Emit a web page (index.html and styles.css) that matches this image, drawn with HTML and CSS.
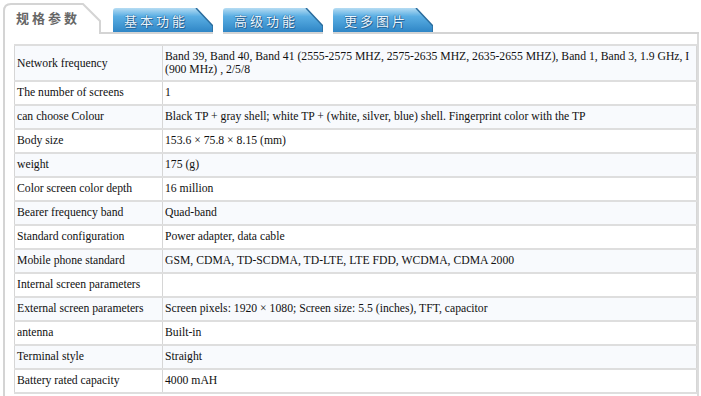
FILE: index.html
```html
<!DOCTYPE html>
<html>
<head>
<meta charset="utf-8">
<link rel="stylesheet" href="styles.css">
</head>
<body>
<div class="wrap">
  <div class="tabs">
    <div class="tab active">
      <svg class="tab-bg" width="98" height="31" viewBox="0 0 98 31"><path d="M1,31 L1,8 Q1,1 8,1 L80,1 L97,18 L97,31" fill="#fff" stroke="#d4d4d4" stroke-width="2"/></svg>
      <span class="tab-label">规格参数</span>
    </div>
    <div class="tab blue">
      <svg class="tab-bg" width="100" height="24" viewBox="0 0 100 24"><defs><linearGradient id="g1" x1="0" y1="0" x2="0" y2="1"><stop offset="0" stop-color="#b6dcf3"/><stop offset="0.35" stop-color="#5aaee3"/><stop offset="1" stop-color="#2f86c6"/></linearGradient></defs><path d="M0,24 L0,3 Q0,0 3,0 L83,0 L100,18 L100,24 Z" fill="url(#g1)"/><path d="M83,0 L100,18 L100,24" fill="none" stroke="#2a6c9c" stroke-width="1.5"/></svg>
      <span class="tab-label">基本功能</span>
    </div>
    <div class="tab blue">
      <svg class="tab-bg" width="100" height="24" viewBox="0 0 100 24"><path d="M0,24 L0,3 Q0,0 3,0 L83,0 L100,18 L100,24 Z" fill="url(#g1)"/><path d="M83,0 L100,18 L100,24" fill="none" stroke="#2a6c9c" stroke-width="1.5"/></svg>
      <span class="tab-label">高级功能</span>
    </div>
    <div class="tab blue">
      <svg class="tab-bg" width="100" height="24" viewBox="0 0 100 24"><path d="M0,24 L0,3 Q0,0 3,0 L83,0 L100,18 L100,24 Z" fill="url(#g1)"/><path d="M83,0 L100,18 L100,24" fill="none" stroke="#2a6c9c" stroke-width="1.5"/></svg>
      <span class="tab-label">更多图片</span>
    </div>
    <div class="tab-rest"></div>
  </div>
  <div class="panel">
    <table class="spec">
      <tr><td class="k">Network frequency</td><td class="v">Band 39, Band 40, Band 41 (2555-2575 MHZ, 2575-2635 MHZ, 2635-2655 MHZ), Band 1, Band 3, 1.9 GHz, I (900 MHz) , 2/5/8</td></tr>
      <tr><td class="k">The number of screens</td><td class="v">1</td></tr>
      <tr><td class="k">can choose Colour</td><td class="v">Black TP + gray shell; white TP + (white, silver, blue) shell. Fingerprint color with the TP</td></tr>
      <tr><td class="k">Body size</td><td class="v">153.6 × 75.8 × 8.15 (mm)</td></tr>
      <tr><td class="k">weight</td><td class="v">175 (g)</td></tr>
      <tr><td class="k">Color screen color depth</td><td class="v">16 million</td></tr>
      <tr><td class="k">Bearer frequency band</td><td class="v">Quad-band</td></tr>
      <tr><td class="k">Standard configuration</td><td class="v">Power adapter, data cable</td></tr>
      <tr><td class="k">Mobile phone standard</td><td class="v">GSM, CDMA, TD-SCDMA, TD-LTE, LTE FDD, WCDMA, CDMA 2000</td></tr>
      <tr><td class="k">Internal screen parameters</td><td class="v"></td></tr>
      <tr><td class="k">External screen parameters</td><td class="v">Screen pixels: 1920 × 1080; Screen size: 5.5 (inches), TFT, capacitor</td></tr>
      <tr><td class="k">antenna</td><td class="v">Built-in</td></tr>
      <tr><td class="k">Terminal style</td><td class="v">Straight</td></tr>
      <tr><td class="k">Battery rated capacity</td><td class="v">4000 mAH</td></tr>
    </table>
  </div>
</div>
</body>
</html>
```
FILE: styles.css
```css
html, body { margin: 0; padding: 0; background: #fff; }
body { font-family: "Liberation Serif", "Times New Roman", serif; font-size: 12px; color: #111; overflow: hidden; }
.wrap { padding: 3px 0 0 3px; width: 696px; }
.tabs { display: flex; align-items: flex-end; height: 31px; }
.tab { position: relative; display: flex; align-items: center; justify-content: center; flex: none; }
.tab-bg { position: absolute; left: 0; top: 0; }
.tab-label { position: relative; font-family: "Noto Sans CJK SC", sans-serif; font-size: 13px; line-height: 1; }
.tab.active { width: 98px; height: 31px; justify-content: flex-start; }
.tab.active .tab-label { color: #666; font-weight: 700; letter-spacing: 3px; padding: 0 0 2px 13px; }
.tab.blue { width: 100px; height: 24px; margin-left: 12px; margin-right: -2px; border-bottom: 2px solid #d4d4d4; box-sizing: content-box; }
.tab.blue .tab-label { color: #eaf6ff; letter-spacing: 3px; padding: 0 14px 0 0; text-shadow: 0 0 1px #1f5a8a, 0 0 1px #1f5a8a, 1px 1px 0 #2b6a9e; }
.tab-rest { flex: 1; height: 0; border-bottom: 2px solid #d4d4d4; margin-left: 2px; }
.tab.active + .tab.blue { margin-left: 0; padding-left: 12px; }
.tab.active + .tab.blue .tab-bg { left: 12px; }
.panel { border-left: 2px solid #d4d4d4; border-right: 2px solid #dcdcdc; padding: 10px 0 4px 9px; }
.spec { border-collapse: collapse; width: 683px; font-family: "Liberation Serif", "Times New Roman", serif; font-size: 11.7px; }
.spec td { border-top: 2px solid #dedede; border-bottom: 2px solid #dedede; border-left: 1px solid #d6d6d6; border-right: 1px solid #d6d6d6; padding: 4px 3px 5px 2px; line-height: 13px; vertical-align: middle; color: #111; }
.spec td.k { width: 142px; }
.spec tr:nth-child(odd) td { background: #f8fafd; }
.spec tr:first-child td { padding-top: 4px; padding-bottom: 4px; }
```
